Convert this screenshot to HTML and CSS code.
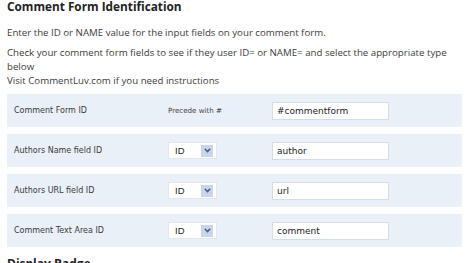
FILE: index.html
```html
<!DOCTYPE html>
<html>
<head>
<meta charset="utf-8">
<link rel="stylesheet" href="styles.css">
</head>
<body>
<div class="page">
  <h2 class="title">Comment Form Identification</h2>
  <p class="text">Enter the ID or NAME value for the input fields on your comment form.</p>
  <p class="text">Check your comment form fields to see if they user ID= or NAME= and select the appropriate type below<br>Visit CommentLuv.com if you need instructions</p>
  <div class="rows">
    <div class="row">
      <div class="label">Comment Form ID</div>
      <div class="hint">Precede with #</div>
      <div class="field"><span class="input">#commentform</span></div>
    </div>
    <div class="row">
      <div class="label">Authors Name field ID</div>
      <div class="sel"><span class="select"><span class="val">ID</span><span class="btn"><svg width="7" height="5" viewBox="0 0 7 5"><path d="M0.8 0.8 L3.5 3.6 L6.2 0.8" fill="none" stroke="#4a5f88" stroke-width="1.6"/></svg></span></span></div>
      <div class="field"><span class="input">author</span></div>
    </div>
    <div class="row">
      <div class="label">Authors URL field ID</div>
      <div class="sel"><span class="select"><span class="val">ID</span><span class="btn"><svg width="7" height="5" viewBox="0 0 7 5"><path d="M0.8 0.8 L3.5 3.6 L6.2 0.8" fill="none" stroke="#4a5f88" stroke-width="1.6"/></svg></span></span></div>
      <div class="field"><span class="input">url</span></div>
    </div>
    <div class="row">
      <div class="label">Comment Text Area ID</div>
      <div class="sel"><span class="select"><span class="val">ID</span><span class="btn"><svg width="7" height="5" viewBox="0 0 7 5"><path d="M0.8 0.8 L3.5 3.6 L6.2 0.8" fill="none" stroke="#4a5f88" stroke-width="1.6"/></svg></span></span></div>
      <div class="field"><span class="input">comment</span></div>
    </div>
  </div>
  <h2 class="title second">Display Badge</h2>
</div>
</body>
</html>
```
FILE: styles.css
```css
html, body {
  margin: 0;
  padding: 0;
  background: #ffffff;
}
.page {
  width: 455px;
  padding: 0 0 0 7px;
  font-family: "Open Sans", "DejaVu Sans", sans-serif;
  color: #3c3c3c;
}
.title {
  margin: 0;
  font-size: 11.8px;
  font-weight: bold;
  line-height: 15px;
  color: #222222;
  height: 15px;
  margin-top: -1px;
}
.text {
  margin: 12px 0 0 0;
  font-size: 9.7px;
  line-height: 14px;
}
.text + .text {
  margin-top: 6px;
}
.rows {
  margin-top: 6px;
  display: flex;
  flex-direction: column;
  gap: 7px;
}
.row {
  height: 33px;
  background: #eaf0f7;
  display: grid;
  grid-template-columns: 154px 104px 1fr;
  align-items: center;
  padding-left: 7px;
}
.label {
  font-family: "DejaVu Sans", sans-serif;
  font-size: 8px;
  color: #3a3a3a;
}
.hint {
  font-family: "DejaVu Sans", sans-serif;
  font-size: 7.1px;
  color: #444444;
}
.sel {
  display: flex;
}
.select {
  height: 15px;
  border: 1px solid #e3e6ea;
  background: #ffffff;
  display: flex;
  align-items: center;
  justify-content: space-between;
  padding-left: 6px;
  padding-right: 3px;
  width: 38px;
}
.val {
  font-family: "Liberation Sans", sans-serif;
  font-size: 9.5px;
  color: #222222;
}
.btn {
  width: 12px;
  height: 12px;
  background: #c9d6ec;
  display: flex;
  align-items: center;
  justify-content: center;
}
.input {
  display: block;
  width: 111px;
  height: 16px;
  border: 1px solid #d6dce4;
  background: #ffffff;
  font-family: "DejaVu Sans", sans-serif;
  font-size: 9px;
  line-height: 16px;
  padding-left: 4px;
  color: #222222;
}
.second {
  margin-top: 9px;
  font-size: 12px;
}
```
